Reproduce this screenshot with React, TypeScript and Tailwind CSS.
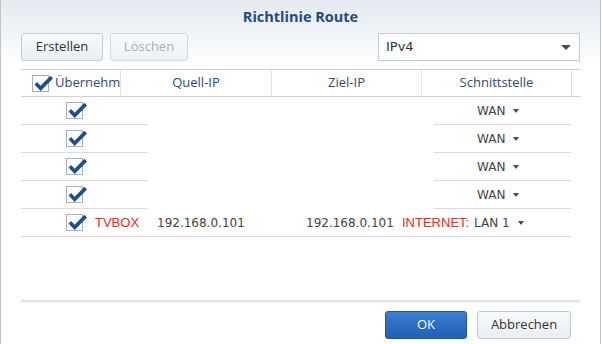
const ui = { fontFamily: '"Open Sans", "Noto Sans", sans-serif' };
const val = { fontFamily: '"DejaVu Sans", Verdana, sans-serif' };
const red = { fontFamily: '"Liberation Sans", Arial, sans-serif' };

function Check() {
  return (
    <div className="relative w-[17px] h-[17px] border border-[#a5afbd] bg-white shrink-0">
      <svg viewBox="0 0 21 17" className="absolute left-0 top-0 w-[21px] h-[17px] overflow-visible">
        <path d="M1.5 8.6 L4.1 6.1 L7.6 9.7 L17.4 -0.2 L20 2.4 L7.7 15 Z" fill="#1f4f8f" />
      </svg>
    </div>
  );
}

function Caret() {
  return <span className="inline-block w-0 h-0 border-x-[3.5px] border-x-transparent border-t-[4px] border-t-[#4a4a4a]" />;
}

function Wan() {
  return (
    <span className="flex items-center gap-[8px] text-[12px] text-[#444]" style={val}>
      WAN
      <Caret />
    </span>
  );
}

function PlainRow() {
  return (
    <div className="flex h-[28px]">
      <div className="w-[127px] border-b border-[#dcdcdc] flex items-center pl-[45px]">
        <Check />
      </div>
      <div className="w-[286px]" />
      <div className="w-[137px] border-b border-[#dcdcdc] flex items-center pl-[43px]">
        <Wan />
      </div>
    </div>
  );
}

export default function App() {
  return (
    <div className="w-[602px] h-[344px] flex bg-white overflow-hidden" style={ui}>
      <div className="w-px bg-[#c2c2c2]" />
      <div className="w-[599px] flex flex-col bg-[linear-gradient(to_bottom,#e5eaf0_0px,#f3f6f9_38px,#ffffff_66px)]">
        <div className="h-[33px] flex items-center justify-center">
          <span className="text-[14.5px] font-bold text-[#1f4b84]">Richtlinie Route</span>
        </div>

        <div className="flex px-[20px] h-[28px]">
          <button className="w-[82px] h-[28px] rounded-[3px] border border-[#c3cad4] bg-gradient-to-b from-[#f8fafc] to-[#e9eef4] text-[13px] text-[#333]">
            Erstellen
          </button>
          <button className="ml-[7px] w-[78px] h-[28px] rounded-[3px] border border-[#d3d8df] bg-gradient-to-b from-[#f8fafc] to-[#eef1f5] text-[13px] text-[#a9afb8]">
            Löschen
          </button>
          <div className="ml-auto w-[202px] h-[28px] border border-[#c3c9d2] bg-white flex items-center pl-[7px] pr-[8px]">
            <span className="text-[13px] text-[#333]" style={val}>IPv4</span>
            <span className="ml-auto inline-block w-0 h-0 border-x-[5px] border-x-transparent border-t-[5px] border-t-[#4a4a4a]" />
          </div>
        </div>

        <div className="mt-[8px] mx-[20px] w-[560px]">
          <div className="flex h-[28px] border-y border-[#d2d2d2] text-[13px] text-[#2a4c7d]">
            <div className="w-[100px] border-r border-[#dde2ea] flex items-center pl-[11px] overflow-hidden">
              <Check />
              <span className="ml-[6px] whitespace-nowrap">Übernehmen</span>
            </div>
            <div className="w-[151px] border-r border-[#dde2ea] flex items-center justify-center">Quell-IP</div>
            <div className="w-[150px] border-r border-[#dde2ea] flex items-center justify-center">Ziel-IP</div>
            <div className="w-[150px] border-r border-[#dde2ea] flex items-center justify-center">Schnittstelle</div>
            <div className="flex-1" />
          </div>

          <PlainRow />
          <PlainRow />
          <PlainRow />
          <PlainRow />

          <div className="flex items-center h-[28px] w-[550px] border-b border-[#dcdcdc] pl-[45px]">
            <Check />
            <span className="ml-[12px] w-[62px] text-[13px] text-[#f0261b]" style={red}>TVBOX</span>
            <span className="w-[149px] text-[12px] text-[#444]" style={val}>192.168.0.101</span>
            <span className="w-[96px] text-[12px] text-[#444]" style={val}>192.168.0.101</span>
            <span className="w-[72px] text-[13px] text-[#f0261b]" style={red}>INTERNET:</span>
            <span className="flex items-center gap-[8px] text-[12px] text-[#444]" style={val}>
              LAN 1
              <Caret />
            </span>
          </div>
        </div>

        <div className="mt-[63px] mx-[20px] h-[3px] bg-gradient-to-b from-[#dddddd] to-[#f2f2f2]" />

        <div className="mt-[8px] flex justify-end gap-[10px] pr-[29px]">
          <button className="w-[82px] h-[28px] rounded-[3px] border border-[#1c56a5] bg-gradient-to-b from-[#3a7ed2] to-[#225fb5] text-[13px] text-white">
            OK
          </button>
          <button className="w-[94px] h-[28px] rounded-[3px] border border-[#bcc6d3] bg-gradient-to-b from-[#f8fafc] to-[#e9eef4] text-[13px] text-[#333]">
            Abbrechen
          </button>
        </div>
      </div>
      <div className="w-px bg-[#c2c2c2]" />
      <div className="w-px bg-white" />
    </div>
  );
}
